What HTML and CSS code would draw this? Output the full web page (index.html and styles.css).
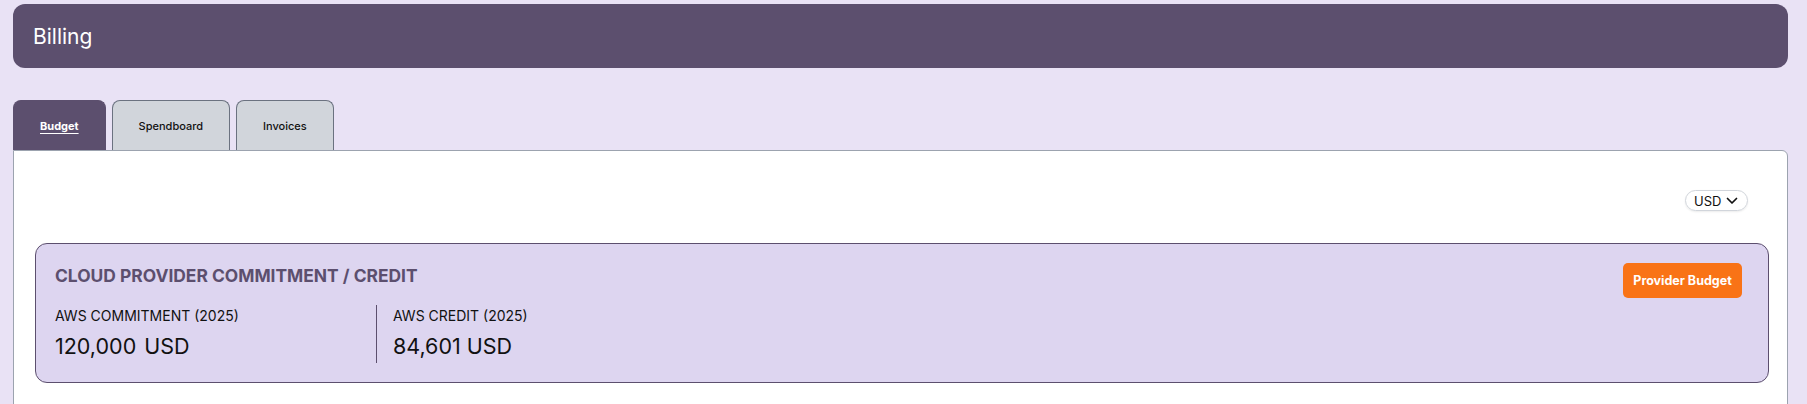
FILE: index.html
```html
<!DOCTYPE html>
<html lang="en">
<head>
<meta charset="utf-8">
<title>Billing</title>
<link rel="stylesheet" href="styles.css">
</head>
<body>
<div class="page">
  <header class="page-header">Billing</header>
  <nav class="tabs">
    <div class="tab tab-active">Budget</div>
    <div class="tab">Spendboard</div>
    <div class="tab">Invoices</div>
  </nav>
  <main class="panel">
    <div class="toolbar">
      <div class="currency-select">
        <span>USD</span>
        <svg class="chev" width="12" height="8" viewBox="0 0 12 8"><path d="M1.5 1.5l4.5 4.5l4.5-4.5" fill="none" stroke="#111" stroke-width="1.7" stroke-linecap="round" stroke-linejoin="round"/></svg>
      </div>
    </div>
    <section class="card">
      <div class="card-head">
        <h2 class="card-title">CLOUD PROVIDER COMMITMENT / CREDIT</h2>
        <button class="btn-orange">Provider Budget</button>
      </div>
      <div class="stats">
        <div class="stat stat-first">
          <div class="stat-label">AWS COMMITMENT (2025)</div>
          <div class="stat-value">120,000 <span class="cur">USD</span></div>
        </div>
        <div class="stat stat-second">
          <div class="stat-label">AWS CREDIT (2025)</div>
          <div class="stat-value">84,601 USD</div>
        </div>
      </div>
    </section>
  </main>
</div>
</body>
</html>
```

FILE: styles.css
```css
* { box-sizing: border-box; }
html, body { margin: 0; padding: 0; }
body {
  background: #e9e2f5;
  font-family: Inter, "Noto Sans", "Liberation Sans", sans-serif;
  color: #111;
  height: 404px;
  overflow: hidden;
}
.page {
  padding: 4px 19px 0 13px;
}
.page-header {
  height: 64px;
  background: #5c4f6e;
  border-radius: 12px;
  color: #fff;
  font-size: 21px;
  display: flex;
  align-items: center;
  padding-left: 20px;
}
.tabs {
  display: flex;
  gap: 6px;
  margin-top: 32px;
  height: 50px;
}
.tab {
  height: 50px;
  padding: 0 26px;
  border: 1px solid #6b7280;
  border-bottom: none;
  border-radius: 8px 8px 0 0;
  background: #d1d5db;
  font-size: 11px;
  font-weight: 500;
  display: flex;
  align-items: center;
  color: #111;
}
.tab-active {
  background: #5c4f6e;
  border-color: #5c4f6e;
  color: #fff;
  font-weight: 700;
  text-decoration: underline;
  text-underline-offset: 3px;
}
.panel {
  background: #fff;
  border: 1px solid #9ca3af;
  border-radius: 0 6px 0 0;
  padding: 39px 18px 30px 21px;
  min-height: 260px;
}
.toolbar {
  display: flex;
  justify-content: flex-end;
  padding-right: 21px;
}
.currency-select {
  width: 63px;
  height: 21px;
  border: 1px solid #d1d5db;
  border-radius: 11px;
  box-shadow: 0 1px 2px rgba(0,0,0,0.08);
  display: flex;
  align-items: center;
  gap: 5px;
  padding-left: 8px;
  font-size: 13px;
  color: #111;
}
.chev { display: block; }
.card {
  margin-top: 32px;
  background: #ddd5f0;
  border: 1px solid #5c4f6e;
  border-radius: 12px;
  padding: 19px 26px 19px 19px;
}
.card-head {
  display: flex;
  justify-content: space-between;
  align-items: flex-start;
}
.card-title {
  margin: 3px 0 0;
  font-size: 17.4px;
  line-height: 20px;
  font-weight: 700;
  color: #5c4f6e;
}
.btn-orange {
  height: 35px;
  width: 119px;
  border: none;
  border-radius: 5px;
  background: #f97316;
  color: #fff;
  font-family: inherit;
  font-size: 12.5px;
  font-weight: 700;
  padding: 0;
}
.stats {
  display: flex;
  margin-top: 7px;
}
.stat {
  padding: 1px 0 2px;
}
.stat-first {
  width: 322px;
  border-right: 1px solid #5c4f6e;
}
.stat-second {
  padding-left: 16px;
}
.stat-label {
  font-size: 14px;
  line-height: 20px;
  margin-bottom: 5px;
  color: #111;
}
.stat-value {
  font-size: 21.5px;
  line-height: 30px;
  color: #111;
}
.cur { margin-left: 2px; }
```
